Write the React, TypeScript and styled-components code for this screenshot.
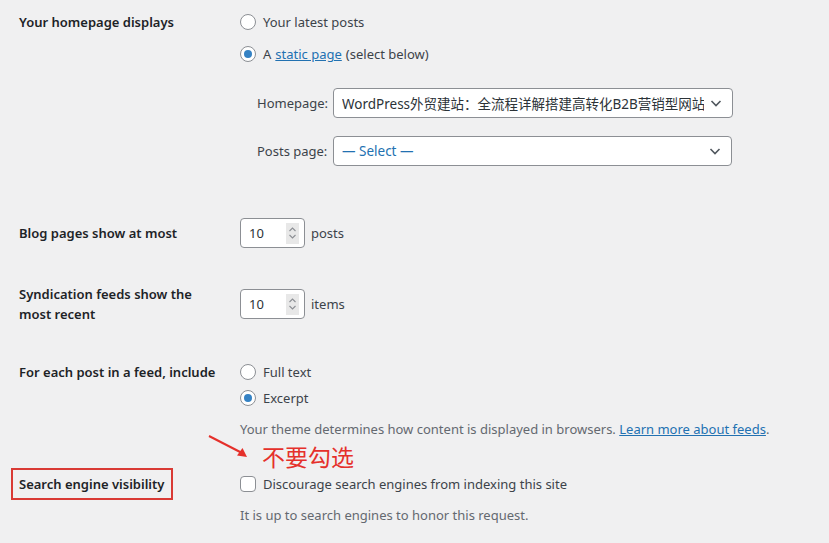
import React from 'react';
import styled, { createGlobalStyle } from 'styled-components';

const GlobalStyle = createGlobalStyle`
  html, body {
    margin: 0;
    padding: 0;
    background: #f0f0f1;
  }
  body {
    font-family: 'Noto Sans', 'Noto Sans CJK SC', sans-serif;
    font-size: 13px;
    color: #3c434a;
  }
`;

const Page = styled.div`
  width: 829px;
  height: 543px;
  box-sizing: border-box;
  padding: 12px 0 0 19px;
  overflow: hidden;
`;

const Row = styled.div<{ $top?: number; $center?: boolean }>`
  position: relative;
  display: flex;
  align-items: ${(p) => (p.$center ? 'center' : 'flex-start')};
  margin-top: ${(p) => p.$top ?? 0}px;
`;

const Label = styled.div`
  flex: 0 0 200px;
  margin-right: 21px;
  font-weight: 600;
  color: #1d2327;
  line-height: 20px;
`;

const BoxedLabel = styled(Label)`
  flex: 0 0 auto;
  width: 145px;
  margin: 0 67px 0 -8px;
  padding: 4px 7px 4px 6px;
  border: 2px solid #d93a35;
  white-space: nowrap;
`;

const Field = styled.div<{ $gap?: number }>`
  display: flex;
  flex-direction: column;
  gap: ${(p) => p.$gap ?? 0}px;
`;

const Choice = styled.label<{ $h?: number }>`
  display: flex;
  align-items: center;
  gap: 7px;
  height: ${(p) => p.$h ?? 20}px;
  line-height: 20px;
`;

const Radio = styled.span<{ $checked?: boolean }>`
  box-sizing: border-box;
  width: 16px;
  height: 16px;
  border-radius: 50%;
  border: 1px solid #8c8f94;
  background: #fff;
  display: flex;
  align-items: center;
  justify-content: center;
  &::after {
    content: '';
    display: ${(p) => (p.$checked ? 'block' : 'none')};
    width: 8px;
    height: 8px;
    border-radius: 50%;
    background: #3582c4;
  }
`;

const Checkbox = styled.span`
  box-sizing: border-box;
  width: 16px;
  height: 16px;
  border-radius: 4px;
  border: 1px solid #8c8f94;
  background: #fff;
`;

const Link = styled.a<{ $tight?: boolean }>`
  color: #2271b1;
  text-decoration: underline;
  margin: 0 ${(p) => (p.$tight ? 0 : 4)}px;
`;

const SubList = styled.div`
  display: flex;
  flex-direction: column;
  gap: 18px;
  margin-top: 12px;
  padding-left: 17px;
`;

const SubRow = styled.div`
  display: flex;
  align-items: center;
`;

const SubLabel = styled.span`
  width: 76px;
`;

const SelectBox = styled.div<{ $width: number; $muted?: boolean }>`
  box-sizing: border-box;
  width: ${(p) => p.$width}px;
  height: 30px;
  display: flex;
  align-items: center;
  padding: 0 8px;
  gap: 4px;
  background: #fff;
  border: 1px solid #8c8f94;
  border-radius: 4px;
  color: ${(p) => (p.$muted ? '#2271b1' : '#2c3338')};
  font-size: 13.5px;
`;

const SelectText = styled.span`
  flex: 1;
  white-space: nowrap;
  overflow: hidden;
`;

const NumberRow = styled.div`
  display: flex;
  align-items: center;
  gap: 6px;
`;

const NumberBox = styled.div`
  box-sizing: border-box;
  width: 65px;
  height: 30px;
  display: flex;
  align-items: center;
  justify-content: space-between;
  padding: 0 5px 0 8px;
  background: #fff;
  border: 1px solid #8c8f94;
  border-radius: 4px;
  color: #2c3338;
`;

const Spinner = styled.span`
  width: 13px;
  height: 21px;
  background: #e8e8e8;
  display: flex;
  align-items: center;
  justify-content: center;
`;

const Description = styled.p<{ $top?: number }>`
  margin: ${(p) => p.$top ?? 0}px 0 0;
  color: #646970;
  line-height: 20px;
`;

const Annotation = styled.div`
  position: absolute;
  left: 189px;
  top: -34px;
  display: flex;
  align-items: flex-start;
  gap: 12px;
  pointer-events: none;
`;

const AnnotationText = styled.span`
  margin-top: 8px;
  font-family: 'Noto Sans CJK SC', sans-serif;
  font-size: 23px;
  line-height: 28px;
  color: #e5302b;
`;

const Chevron = () => (
  <svg width="16" height="16" viewBox="0 0 16 16" fill="none">
    <path d="M3.5 6l4.5 4.5L12.5 6" stroke="#50575e" strokeWidth="1.6" />
  </svg>
);

const SpinArrows = () => (
  <svg width="9" height="16" viewBox="0 0 9 16" fill="none">
    <path d="M1.5 6L4.5 3l3 3M1.5 10l3 3 3-3" stroke="#8c8f94" strokeWidth="1.1" />
  </svg>
);

const NumberInput = ({ value, unit }: { value: string; unit: string }) => (
  <NumberRow>
    <NumberBox>
      <span>{value}</span>
      <Spinner>
        <SpinArrows />
      </Spinner>
    </NumberBox>
    <span>{unit}</span>
  </NumberRow>
);

export default function App() {
  return (
    <>
      <GlobalStyle />
      <Page>
        <Row>
          <Label>Your homepage displays</Label>
          <Field $gap={12}>
            <Choice>
              <Radio />
              Your latest posts
            </Choice>
            <Choice>
              <Radio $checked />
              <span>
                A<Link>static page</Link>(select below)
              </span>
            </Choice>
            <SubList>
              <SubRow>
                <SubLabel>Homepage:</SubLabel>
                <SelectBox $width={400}>
                  <SelectText>WordPress外贸建站：全流程详解搭建高转化B2B营销型网站</SelectText>
                  <Chevron />
                </SelectBox>
              </SubRow>
              <SubRow>
                <SubLabel>Posts page:</SubLabel>
                <SelectBox $width={399} $muted>
                  <SelectText>— Select —</SelectText>
                  <Chevron />
                </SelectBox>
              </SubRow>
            </SubList>
          </Field>
        </Row>

        <Row $top={52} $center>
          <Label>Blog pages show at most</Label>
          <NumberInput value="10" unit="posts" />
        </Row>

        <Row $top={36} $center>
          <Label>Syndication feeds show the most recent</Label>
          <NumberInput value="10" unit="items" />
        </Row>

        <Row $top={38}>
          <Label>For each post in a feed, include</Label>
          <Field $gap={6}>
            <Choice>
              <Radio />
              Full text
            </Choice>
            <Choice>
              <Radio $checked />
              Excerpt
            </Choice>
            <Description $top={5}>
              Your theme determines how content is displayed in browsers.{' '}
              <Link $tight>Learn more about feeds</Link>.
            </Description>
          </Field>
        </Row>

        <Row $top={29}>
          <BoxedLabel>Search engine visibility</BoxedLabel>
          <Field>
            <Choice $h={32}>
              <Checkbox />
              Discourage search engines from indexing this site
            </Choice>
            <Description $top={5}>It is up to search engines to honor this request.</Description>
          </Field>
          <Annotation>
            <svg width="42" height="26" viewBox="0 0 42 26" fill="none">
              <path d="M1 2L36 20" stroke="#e5302b" strokeWidth="2" />
              <path d="M39 23L29 21.5L34.5 14z" fill="#e5302b" />
            </svg>
            <AnnotationText>不要勾选</AnnotationText>
          </Annotation>
        </Row>
      </Page>
    </>
  );
}
